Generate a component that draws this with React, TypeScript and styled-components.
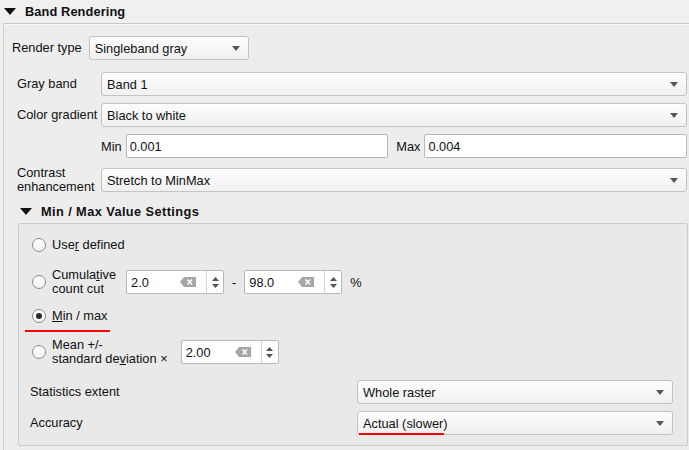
import { createGlobalStyle, css, styled } from "styled-components";

const GlobalStyle = createGlobalStyle`
  html, body {
    margin: 0;
    padding: 0;
    background: #f0f0f0;
  }
  body {
    font-family: "Liberation Sans", Arial, sans-serif;
    font-size: 12.8px;
    color: #111;
    overflow: hidden;
  }
`;

const Page = styled.div`
  width: 689px;
  height: 450px;
  overflow: hidden;
`;

const SectionHeader = styled.div<{ $indent: number; $spacing: number; $top?: number }>`
  display: flex;
  align-items: center;
  gap: 9px;
  height: 23px;
  margin-top: ${(p) => p.$top ?? 0}px;
  padding-left: ${(p) => p.$indent}px;
  font-weight: bold;
  letter-spacing: ${(p) => p.$spacing}px;
`;

const Panel = styled.div`
  margin-left: 3px;
  height: 440px;
  border-top: 1px solid #c9c9c9;
  border-left: 1px solid #d2d2d2;
  box-shadow: inset 0 1px 0 #f9f9f9;
  background: #ededed;
  padding-top: 12px;
`;

const RenderRow = styled.div`
  display: flex;
  align-items: center;
  gap: 7px;
  padding-left: 8px;
`;

const Label = styled.span`
  white-space: nowrap;
  line-height: 14px;
`;

const TwoLineLabel = styled.span`
  line-height: 14px;
`;

const Combo = styled.div<{ $width?: number; $marked?: boolean }>`
  position: relative;
  display: flex;
  align-items: center;
  box-sizing: border-box;
  height: 24px;
  width: ${(p) => (p.$width ? `${p.$width}px` : "auto")};
  padding: 0 8px 0 5px;
  border: 1px solid #c3c3c3;
  border-radius: 3px;
  background: linear-gradient(#fdfdfd, #f0f0f0);
  white-space: nowrap;

  ${(p) =>
    p.$marked &&
    css`
      &::after {
        content: "";
        position: absolute;
        left: 1px;
        bottom: -1px;
        width: 85px;
        height: 2px;
        background: #ff0000;
      }
    `}
`;

const ComboArrow = styled.svg`
  margin-left: auto;
  flex: none;
`;

const BandForm = styled.div`
  display: grid;
  grid-template-columns: 84px 1fr;
  grid-template-rows: 24px 24px 24px 30px;
  row-gap: 7px;
  align-items: center;
  margin: 12px 2px 0 13px;
`;

const RangeRow = styled.div`
  display: flex;
  align-items: center;
`;

const Field = styled.div`
  flex: 1;
  display: flex;
  align-items: center;
  box-sizing: border-box;
  height: 24px;
  padding-left: 3px;
  background: #fff;
  border: 1px solid #b8b8b8;
  border-radius: 2px;
`;

const FieldLabel = styled.span<{ $gapBefore?: number }>`
  margin: 0 4px 0 ${(p) => p.$gapBefore ?? 0}px;
`;

const SettingsBox = styled.div`
  margin: 0 1px 0 14px;
  height: 223px;
  box-sizing: border-box;
  border: 1px solid #cbcbcb;
  border-radius: 2px;
  background: #e9e9e9;
  padding: 0 14px 0 11px;
`;

const OptionRow = styled.div<{ $top: number; $marked?: boolean }>`
  position: relative;
  display: flex;
  align-items: center;
  gap: 6px;
  margin-top: ${(p) => p.$top}px;
  padding-left: 2px;

  ${(p) =>
    p.$marked &&
    css`
      &::after {
        content: "";
        position: absolute;
        left: -5px;
        top: 21px;
        width: 85px;
        height: 2px;
        background: #ff0000;
      }
    `}
`;

const Radio = styled.span<{ $checked?: boolean }>`
  flex: none;
  position: relative;
  width: 14px;
  height: 14px;
  box-sizing: border-box;
  border-radius: 50%;
  border: 1px solid #8c8c8c;
  background: linear-gradient(#ffffff, #f3f3f3);

  ${(p) =>
    p.$checked &&
    css`
      &::after {
        content: "";
        position: absolute;
        left: 3px;
        top: 3px;
        width: 6px;
        height: 6px;
        border-radius: 50%;
        background: #2b2b2b;
      }
    `}
`;

const SpinGroup = styled.div<{ $offset: number }>`
  display: flex;
  align-items: center;
  gap: 8px;
  margin-left: ${(p) => p.$offset}px;
`;

const SpinBox = styled.div`
  display: flex;
  align-items: center;
  box-sizing: border-box;
  width: 98px;
  height: 24px;
  padding-left: 4px;
  background: #fff;
  border: 1px solid #b8b8b8;
  border-radius: 2px;
`;

const SpinValue = styled.span`
  flex: 1;
`;

const ClearIcon = styled.svg`
  flex: none;
  margin-right: 10px;
`;

const Stepper = styled.div`
  display: flex;
  flex-direction: column;
  align-items: center;
  justify-content: center;
  gap: 3px;
  width: 16px;
  height: 100%;
  border-left: 1px solid #d6d6d6;
`;

const StatsGrid = styled.div`
  display: grid;
  grid-template-columns: 327px 1fr;
  grid-template-rows: 24px 24px;
  row-gap: 7px;
  align-items: center;
  margin-top: 14px;
`;

function Caret() {
  return (
    <svg width="12" height="7" viewBox="0 0 12 7">
      <path d="M0 0H12L6 7Z" fill="#111" />
    </svg>
  );
}

function Arrow() {
  return (
    <ComboArrow width="8" height="5" viewBox="0 0 8 5">
      <path d="M0 0H8L4 5Z" fill="#555" />
    </ComboArrow>
  );
}

function Select({ value, width, marked }: { value: string; width?: number; marked?: boolean }) {
  return (
    <Combo $width={width} $marked={marked}>
      <span>{value}</span>
      <Arrow />
    </Combo>
  );
}

function Spin({ value }: { value: string }) {
  return (
    <SpinBox>
      <SpinValue>{value}</SpinValue>
      <ClearIcon width="16" height="10" viewBox="0 0 16 10">
        <path d="M0 5L4 0H16V10H4Z" fill="#a6a6a6" />
        <path d="M7.5 2.5L12 7.5M12 2.5L7.5 7.5" stroke="#fff" strokeWidth="1.6" />
      </ClearIcon>
      <Stepper>
        <svg width="7" height="4" viewBox="0 0 7 4">
          <path d="M0 4L3.5 0L7 4Z" fill="#555" />
        </svg>
        <svg width="7" height="4" viewBox="0 0 7 4">
          <path d="M0 0H7L3.5 4Z" fill="#555" />
        </svg>
      </Stepper>
    </SpinBox>
  );
}

export default function App() {
  return (
    <Page>
      <GlobalStyle />
      <SectionHeader $indent={4} $spacing={0.1}>
        <Caret />
        <span>Band Rendering</span>
      </SectionHeader>
      <Panel>
        <RenderRow>
          <Label>Render type</Label>
          <Select value="Singleband gray" width={160} />
        </RenderRow>

        <BandForm>
          <Label>Gray band</Label>
          <Select value="Band 1" />

          <Label>Color gradient</Label>
          <Select value="Black to white" />

          <span />
          <RangeRow>
            <FieldLabel>Min</FieldLabel>
            <Field>0.001</Field>
            <FieldLabel $gapBefore={8}>Max</FieldLabel>
            <Field>0.004</Field>
          </RangeRow>

          <TwoLineLabel>
            Contrast
            <br />
            enhancement
          </TwoLineLabel>
          <Select value="Stretch to MinMax" />
        </BandForm>

        <SectionHeader $indent={16} $spacing={0.4} $top={5}>
          <Caret />
          <span>Min / Max Value Settings</span>
        </SectionHeader>

        <SettingsBox>
          <OptionRow $top={14}>
            <Radio />
            <Label>
              Use<u>r</u> defined
            </Label>
          </OptionRow>

          <OptionRow $top={16}>
            <Radio />
            <TwoLineLabel>
              Cumula<u>t</u>ive
              <br />
              count cut
            </TwoLineLabel>
            <SpinGroup $offset={4}>
              <Spin value="2.0" />
              <span>-</span>
              <Spin value="98.0" />
              <span>%</span>
            </SpinGroup>
          </OptionRow>

          <OptionRow $top={13} $marked>
            <Radio $checked />
            <Label>
              <u>M</u>in / max
            </Label>
          </OptionRow>

          <OptionRow $top={15}>
            <Radio />
            <TwoLineLabel>
              Mean +/-
              <br />
              standard de<u>v</u>iation ×
            </TwoLineLabel>
            <SpinGroup $offset={7}>
              <Spin value="2.00" />
            </SpinGroup>
          </OptionRow>

          <StatsGrid>
            <Label>Statistics extent</Label>
            <Select value="Whole raster" />
            <Label>Accuracy</Label>
            <Select value="Actual (slower)" marked />
          </StatsGrid>
        </SettingsBox>
      </Panel>
    </Page>
  );
}
